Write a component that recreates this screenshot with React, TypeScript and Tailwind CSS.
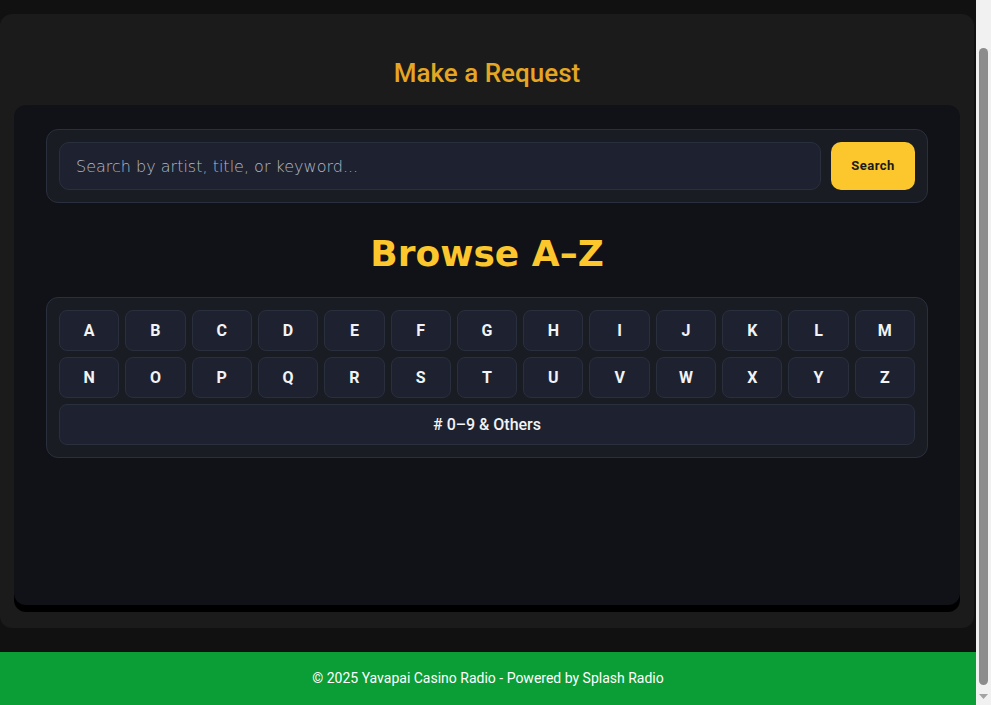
import React from "react";

const row1 = ["A","B","C","D","E","F","G","H","I","J","K","L","M"];
const row2 = ["N","O","P","Q","R","S","T","U","V","W","X","Y","Z"];

function LetterButton({ l }: { l: string }) {
  return (
    <button className="h-[41px] rounded-lg border border-[#2a2f3d] bg-[#1e2230] text-[16px] font-bold text-[#f1f3f6] [font-family:Roboto,sans-serif]">
      {l}
    </button>
  );
}

function FakeScrollbar() {
  return (
    <div className="fixed right-0 top-0 flex h-[705px] w-[15px] flex-col items-center bg-[#f1f1f1]">
      <div className="flex h-[17px] w-full items-center justify-center">
        <svg width="9" height="6" viewBox="0 0 9 6"><path d="M0 6 L4.5 1 L9 6 Z" fill="#f1f1f1" /></svg>
      </div>
      <div className="mt-[31px] h-[637px] w-[9px] rounded-full bg-[#8c8c8c]" />
      <div className="mt-auto flex h-[17px] w-full items-center justify-center">
        <svg width="9" height="6" viewBox="0 0 9 6"><path d="M0 0 L9 0 L4.5 5 Z" fill="#a3a3a3" /></svg>
      </div>
    </div>
  );
}

export default function App() {
  return (
    <div className="min-h-[743px] w-[976px] bg-[#111111] [font-family:Roboto,sans-serif]">
      <div className="pt-[14px] pb-[24px]">
        <div className="mr-[2px] rounded-xl bg-[#1b1b1b] pb-[23px]">
          <h1 className="pt-[42px] pb-[15px] text-center text-[26px] font-medium leading-[34px] text-[#e5a623]">
            Make a Request
          </h1>
          <div className="mx-[14px] h-[500px] rounded-xl bg-[#111217] shadow-[0_7px_0_0_#000] px-[32px] pt-[24px]">
            <div className="flex gap-[10px] rounded-xl border border-[#2a2f3d] bg-[#1a1c23] p-[12px]">
              <input
                className="h-[48px] flex-1 rounded-[10px] border border-[#2a2f3d] bg-[#1e2230] px-[16px] text-[16px] font-extralight text-[#d1d5db] placeholder:text-[#b3b9c4] outline-none [font-family:'DejaVu_Sans',sans-serif]"
                placeholder="Search by artist, title, or keyword..."
              />
              <button className="h-[48px] w-[84px] rounded-[10px] bg-[#fbc72d] text-[13px] font-bold tracking-[0.5px] text-[#1a1a1a]">
                Search
              </button>
            </div>
            <h2 className="mt-[29px] mb-[21px] text-center text-[36px] font-bold leading-[44px] text-[#fbc72d] [font-family:Verdana,'DejaVu_Sans',sans-serif]">
              Browse A–Z
            </h2>
            <div className="rounded-xl border border-[#2a2f3d] bg-[#1a1c23] p-[12px]">
              <div className="grid gap-[6px] grid-cols-[repeat(13,minmax(0,1fr))]">
                {row1.map((l) => (
                  <LetterButton key={l} l={l} />
                ))}
                {row2.map((l) => (
                  <LetterButton key={l} l={l} />
                ))}
                <button className="[grid-column:1/-1] h-[41px] rounded-lg border border-[#2a2f3d] bg-[#1e2230] text-[16px] font-medium text-[#f1f3f6]">
                  # 0–9 &amp; Others
                </button>
              </div>
            </div>
          </div>
        </div>
      </div>
      <footer className="bg-[#0b9d36] pt-[16px] pb-[70px] text-center text-[14px] leading-[20px] text-white">
        © 2025 Yavapai Casino Radio - Powered by Splash Radio
      </footer>
      <FakeScrollbar />
    </div>
  );
}
